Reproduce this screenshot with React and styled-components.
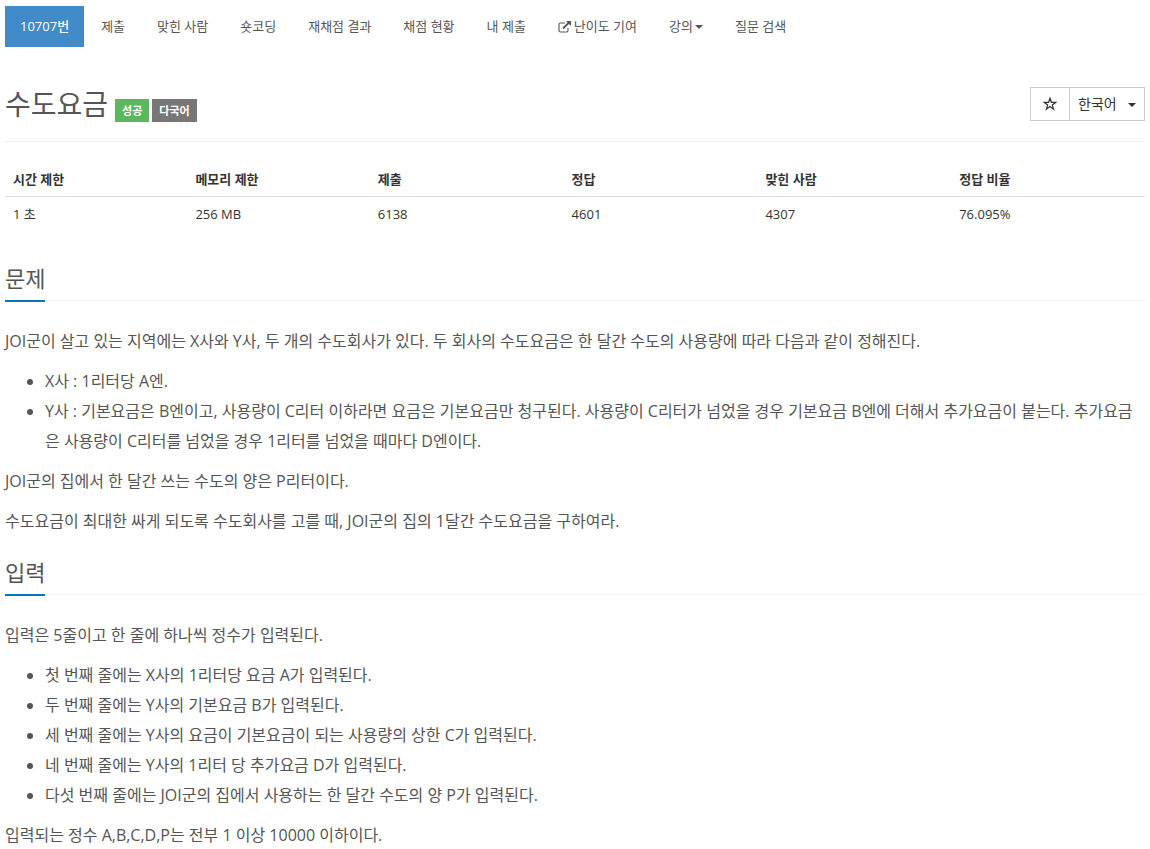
import React from "react";
import styled, { createGlobalStyle, css } from "styled-components";

const GlobalStyle = createGlobalStyle`
  *, *::before, *::after { box-sizing: border-box; }
  body {
    margin: 0;
    background: #fff;
    color: #333;
    font-family: "Open Sans", "Noto Sans CJK KR", sans-serif;
    font-size: 13px;
    line-height: 21px;
  }
`;

const Page = styled.main`
  padding: 6px 5px 0;
`;

const NavList = styled.ul`
  display: flex;
  flex-wrap: wrap;
  gap: 2px;
  margin: 0;
  padding: 0;
  list-style: none;
`;

const NavLink = styled.a`
  display: flex;
  align-items: center;
  padding: 10px 15px;
  color: #555;
  text-decoration: none;
  white-space: nowrap;
  ${(p) =>
    p.$active &&
    css`
      background: #428bca;
      color: #fff;
      font-weight: 500;
    `}
`;

const ExternalIcon = styled.svg`
  width: 13px;
  height: 12px;
  margin-right: 3px;
`;

const Caret = styled.svg`
  width: 8px;
  height: 4px;
  margin-left: ${(p) => (p.$gap ? p.$gap : 0)}px;
`;

const PageHeader = styled.header`
  display: flex;
  justify-content: space-between;
  align-items: flex-start;
  margin-top: 40px;
  padding-bottom: 19px;
  border-bottom: 1px solid #eee;
`;

const TitleGroup = styled.div`
  display: flex;
  align-items: flex-end;
  gap: 3px;
`;

const Title = styled.h1`
  margin: 0 4px 0 0;
  color: #555;
  font-size: 28px;
  font-weight: 400;
  line-height: 35px;
`;

const Badge = styled.span`
  padding: 1px 7px;
  background: ${(p) => p.$color};
  color: #fff;
  font-size: 11px;
  font-weight: 700;
`;

const Controls = styled.div`
  display: flex;
  height: 34px;
  border: 1px solid #ccc;
`;

const StarButton = styled.button`
  width: 39px;
  padding: 0;
  border: 0;
  border-right: 1px solid #ccc;
  background: #fff;
  color: #333;
  display: flex;
  align-items: center;
  justify-content: center;

  svg {
    width: 14px;
    height: 14px;
  }
`;

const SelectBox = styled.div`
  position: relative;

  svg {
    position: absolute;
    right: 8px;
    top: 15px;
    pointer-events: none;
  }
`;

const LanguageSelect = styled.select`
  appearance: none;
  width: 74px;
  height: 100%;
  padding: 0 8px 2px;
  border: 0;
  border-radius: 0;
  background: #fff;
  color: #333;
  font: inherit;
  font-size: 14px;
`;

const LimitsTable = styled.table`
  width: 100%;
  margin-top: 20px;
  border-collapse: collapse;
  table-layout: fixed;
  line-height: 18px;
`;

const HeadCell = styled.th`
  width: ${(p) => p.$width};
  padding: 8px;
  border-bottom: 1px solid #ddd;
  text-align: left;
  font-weight: 700;
`;

const Cell = styled.td`
  padding: 8px;
`;

const Headline = styled.div`
  display: flex;
  margin: ${(p) => p.$top}px 0 25px;
  border-bottom: 1px dotted #e4e9f0;
`;

const HeadlineText = styled.h2`
  margin: 0 0 -2px;
  padding-bottom: 5px;
  border-bottom: 2px solid #0076bd;
  color: #555;
  font-size: 22px;
  font-weight: 400;
  line-height: 33px;
`;

const Body = styled.div`
  color: #555;
  font-size: 16px;
  font-weight: 400;
  line-height: 30px;
`;

const Paragraph = styled.p`
  margin: 0 0 10px;
`;

const List = styled.ul`
  margin: 0 0 10px;
  padding-left: 40px;
`;

const CaretIcon = ({ gap }) => (
  <Caret $gap={gap} viewBox="0 0 8 4" aria-hidden="true">
    <path d="M0 0h8L4 4z" fill="currentColor" />
  </Caret>
);

const navItems = [
  { label: "10707번", active: true },
  { label: "제출" },
  { label: "맞힌 사람" },
  { label: "숏코딩" },
  { label: "재채점 결과" },
  { label: "채점 현황" },
  { label: "내 제출" },
  { label: "난이도 기여", external: true },
  { label: "강의", menu: true },
  { label: "질문 검색" },
];

const limits = [
  ["시간 제한", "1 초", "16%"],
  ["메모리 제한", "256 MB", "16%"],
  ["제출", "6138", "17%"],
  ["정답", "4601", "17%"],
  ["맞힌 사람", "4307", "17%"],
  ["정답 비율", "76.095%", "17%"],
];

export default function App() {
  return (
    <Page>
      <GlobalStyle />
      <nav>
        <NavList>
          {navItems.map((item) => (
            <li key={item.label}>
              <NavLink href="#" $active={item.active}>
                {item.external && (
                  <ExternalIcon viewBox="0 0 13 12" aria-hidden="true">
                    <path
                      d="M7 2H2.500Q1 2 1 3.500V9.500Q1 11 2.500 11H8.500Q10 11 10 9.500V7"
                      fill="none"
                      stroke="currentColor"
                      strokeWidth="1.100"
                    />
                    <path d="M5 7.500L11 1.500" stroke="currentColor" strokeWidth="1.800" />
                    <path d="M8 0H13V5Z" fill="currentColor" />
                  </ExternalIcon>
                )}
                {item.label}
                {item.menu && <CaretIcon gap={2} />}
              </NavLink>
            </li>
          ))}
        </NavList>
      </nav>

      <PageHeader>
        <TitleGroup>
          <Title>수도요금</Title>
          <Badge $color="#5cb85c">성공</Badge>
          <Badge $color="#777">다국어</Badge>
        </TitleGroup>
        <Controls>
          <StarButton type="button" aria-label="즐겨찾기">
            <svg viewBox="0 0 14 14" aria-hidden="true">
              <path
                d="M7 1.200L8.400 5.300H12.800L9.300 7.900L10.600 12.200L7 9.600L3.400 12.200L4.700 7.900L1.200 5.300H5.600Z"
                fill="none"
                stroke="currentColor"
                strokeWidth="1.200"
              />
            </svg>
          </StarButton>
          <SelectBox>
            <LanguageSelect aria-label="언어" defaultValue="ko">
              <option value="ko">한국어</option>
            </LanguageSelect>
            <CaretIcon />
          </SelectBox>
        </Controls>
      </PageHeader>

      <LimitsTable>
        <thead>
          <tr>
            {limits.map(([name, , width]) => (
              <HeadCell key={name} $width={width} scope="col">
                {name}
              </HeadCell>
            ))}
          </tr>
        </thead>
        <tbody>
          <tr>
            {limits.map(([name, value]) => (
              <Cell key={name}>{value}</Cell>
            ))}
          </tr>
        </tbody>
      </LimitsTable>

      <section>
        <Headline $top={31}>
          <HeadlineText>문제</HeadlineText>
        </Headline>
        <Body>
          <Paragraph>
            JOI군이 살고 있는 지역에는 X사와 Y사, 두 개의 수도회사가 있다. 두 회사의 수도요금은 한 달간 수도의 사용량에 따라 다음과 같이 정해진다.
          </Paragraph>
          <List>
            <li>X사 : 1리터당 A엔.</li>
            <li>
              Y사 : 기본요금은 B엔이고, 사용량이 C리터 이하라면 요금은 기본요금만 청구된다. 사용량이 C리터가 넘었을 경우 기본요금 B엔에 더해서 추가요금이 붙는다. 추가요금은 사용량이 C리터를 넘었을 경우 1리터를 넘었을 때마다 D엔이다.
            </li>
          </List>
          <Paragraph>JOI군의 집에서 한 달간 쓰는 수도의 양은 P리터이다.</Paragraph>
          <Paragraph>
            수도요금이 최대한 싸게 되도록 수도회사를 고를 때, JOI군의 집의 1달간 수도요금을 구하여라.
          </Paragraph>
        </Body>
      </section>

      <section>
        <Headline $top={20}>
          <HeadlineText>입력</HeadlineText>
        </Headline>
        <Body>
          <Paragraph>입력은 5줄이고 한 줄에 하나씩 정수가 입력된다.</Paragraph>
          <List>
            <li>첫 번째 줄에는 X사의 1리터당 요금 A가 입력된다.</li>
            <li>두 번째 줄에는 Y사의 기본요금 B가 입력된다.</li>
            <li>세 번째 줄에는 Y사의 요금이 기본요금이 되는 사용량의 상한 C가 입력된다.</li>
            <li>네 번째 줄에는 Y사의 1리터 당 추가요금 D가 입력된다.</li>
            <li>다섯 번째 줄에는 JOI군의 집에서 사용하는 한 달간 수도의 양 P가 입력된다.</li>
          </List>
          <Paragraph>입력되는 정수 A,B,C,D,P는 전부 1 이상 10000 이하이다.</Paragraph>
        </Body>
      </section>
    </Page>
  );
}
